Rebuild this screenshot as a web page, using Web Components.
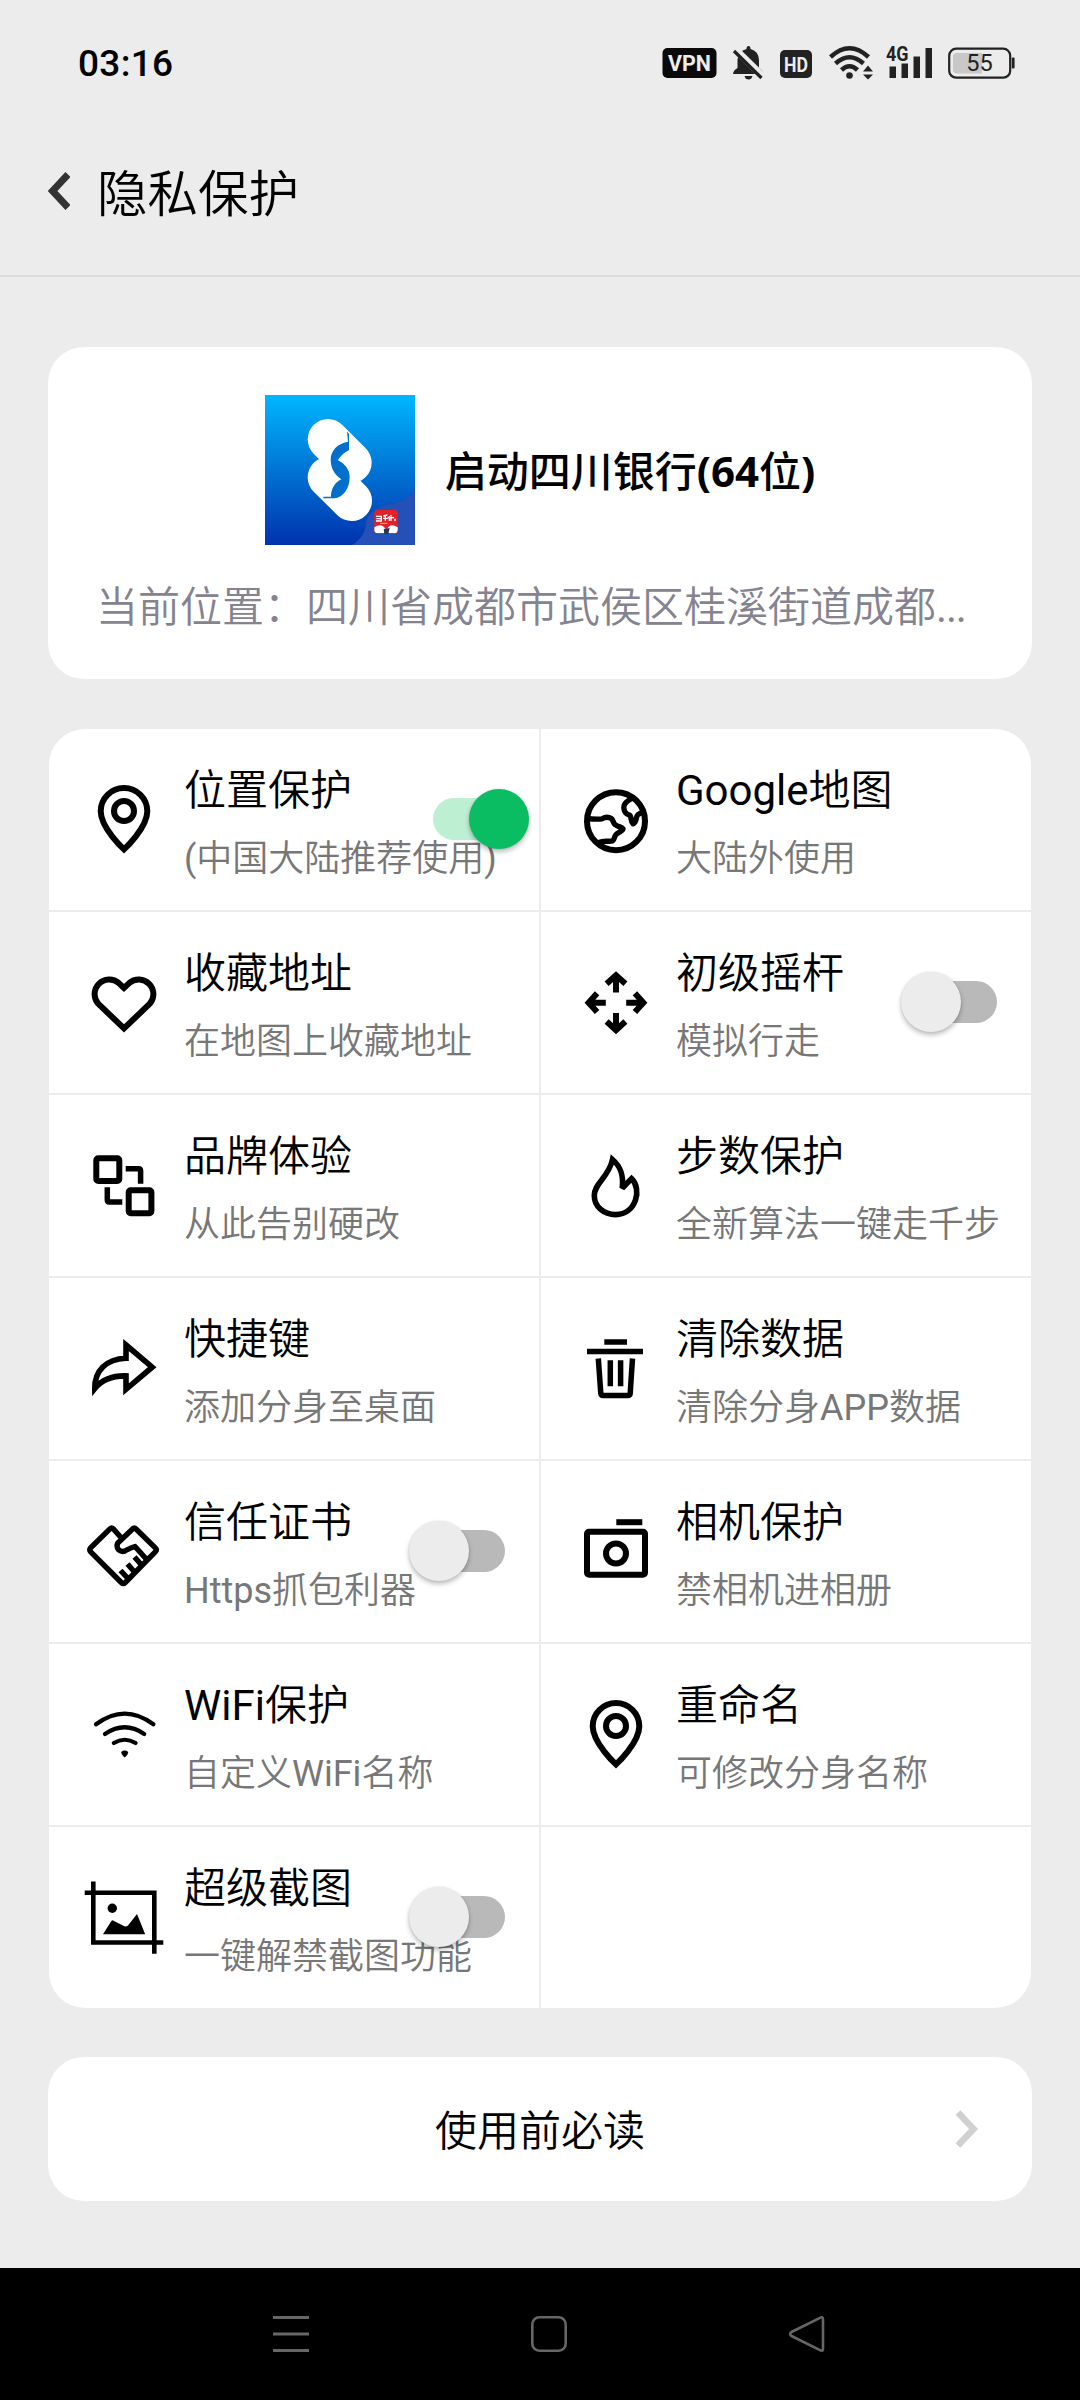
<!DOCTYPE html>
<html lang="zh-CN">
<head>
<meta charset="utf-8">
<meta name="viewport" content="width=1080">
<title>隐私保护</title>
<style>
html,body{margin:0;padding:0}
body{width:1080px;height:2400px;overflow:hidden;background:#ececec;color:#000;font-family:Roboto,"Noto Sans CJK SC",sans-serif;font-weight:350}
</style>
</head>
<body>
<privacy-screen></privacy-screen>
<script>
const define = (name, render) => customElements.define(name, class extends HTMLElement {
  constructor() { super(); this.attachShadow({ mode: 'open' }); }
  connectedCallback() { this.shadowRoot.innerHTML = render(this); }
});

const PIN = '<path d="M36 65.4C36 65.4 12.7 44 12.7 27.3a23.3 23.3 0 0 1 46.6 0C59.3 44 36 65.4 36 65.4z"/><circle cx="36" cy="27" r="10"/>';
const ICONS = {
  pin: PIN,
  heart: '<path d="M36 21L30.8 16.1A14.6 14.6 0 0 0 10.2 36.7L36 61.4L61.8 36.7A14.6 14.6 0 0 0 41.2 16.1Z"/>',
  swap: '<rect x="8.3" y="8.2" width="23" height="22.8" rx="2"/><rect x="40.7" y="40.2" width="22.7" height="23" rx="2"/><path stroke-width="5.5" d="M37.7 18.8H50.6Q52.6 18.8 52.6 20.8V33.8M19.3 37.2V50Q19.3 52 21.3 52H34.3"/>',
  share: '<path stroke-width="5.6" stroke-miterlimit="3" d="M38 12L64.2 34.2L38 56.3V42.9C25 42.6 14 46.5 6.8 55.5C6.5 38 18 26 38 25.3Z"/>',
  globe: '<circle cx="36" cy="37.2" r="29"/><path stroke-width="5.4" stroke-linejoin="round" d="M9 34.8C14 35 18 35.4 22 34.8C25 33 28.500 32.800 31 34.300C33.500 36 33 39 35 40.500C38 43 42 43 43 44.800C43 47 39 48 36.500 50C34 52 35 55 32.500 57C29 58 24 56 19 58.500M52 14C48 17 43.500 19 43.800 23.500C44 28 46 30 49 31C52 31.500 50 37 53 39.800C56 39 56 35 57 32C58 29 61 30 63.500 27"/>',
  move: [0, 90, 180, 270].map(a => `<path stroke-width="6" transform="rotate(${a} 36 35.7)" d="M26.600 16.800L36 8.300L45.400 16.800M36 9V25.500"/>`).join(''),
  flame: '<path stroke-width="5.6" stroke-miterlimit="3" d="M32.500 9.500C40 16 44 24 42.200 38.200L51.500 28.600C57 34 58 43 55.500 50C52 60 44 64.600 35.800 64.600C23.500 64.600 14.300 56.500 14.300 45.500C14.300 33 28.500 28 32.500 9.500Z"/>',
  trash: '<path stroke-width="5.5" d="M24.300 8.900H47M7 18.500H63M30.300 27.200V53.200M40.600 27.200V53.200M18.300 25.500L20.800 60.500Q21 62.500 23 62.500H48Q50 62.500 50.200 60.500L52.500 25.500"/>',
  hands: '<path stroke-width="5.400" stroke-linejoin="round" d="M33 21.500L25.700 13.200Q23.700 11.200 21.700 13.200L2.700 31.800Q.7 33.800 2.700 35.800L33.300 66.500Q35.300 68.500 37.300 66.500L67.300 35.800Q69.300 33.800 67.300 31.800L48.300 13.200Q46.300 11.200 44.300 13.200L29.800 27C27.500 32 31.500 36.500 36.500 35.200C40 33.500 41.500 32 47 30.500L58.700 43.500M46.500 41L54 49.500M39.500 48L47 56.500M32.500 54.500L40 62.500"/>',
  camera: '<rect x="7" y="15.800" width="58" height="43" rx="2"/><circle cx="36" cy="37.500" r="10"/><path d="M36.300 6.200H62.300"/>',
  wifi: '<g stroke-width="4.200" stroke-linecap="round"><path d="M8 25.300Q36.700 4 65.400 25.300M17 35Q36.700 21.500 56.200 35M25.800 44Q36.700 37.500 47.600 44"/></g><path fill="#000" stroke="none" d="M33.200 53Q36.700 50.200 40.200 53Q40.500 55 36.700 58.600Q33 55 33.200 53Z"/>',
  crop: '<path stroke-width="4.600" d="M5.300-.6V60.500H75.300M-3.300 10.700H66.300V71.800"/><g fill="#000" stroke="none"><circle cx="24.300" cy="26.300" r="4.700"/><path d="M15 52.300L23.400 38.900Q24 38 25 38.400L36.500 44.200Q38.500 45 40 43.400L49 32L57.200 52.300Z"/></g>'
};

define('status-bar', () => `<style>
:host{display:flex;align-items:center;height:125px;padding:0 65px 0 78px;box-sizing:border-box}
time{font-size:37px;font-weight:500;letter-spacing:.3px;margin-right:auto;padding-top:1px}
svg{display:block;fill:#222;overflow:visible}
text{font-family:Roboto,sans-serif;font-weight:700;fill:#ececec}
.vpn{margin-right:15px}.bell{margin-right:16px}.hd{margin-right:17px}.wifi{margin-right:13px}.sig{margin-right:16px}
</style>
<time>03:16</time>
<svg class="vpn" width="56" height="34"><rect x=".5" y="2" width="54" height="30" rx="5" fill="#0a0a0a"/><text x="27.500" y="25" font-size="22" text-anchor="middle" textLength="43" lengthAdjust="spacingAndGlyphs">VPN</text></svg>
<svg class="bell" width="31" height="34"><path d="M15.500 0q2 0 2 3q8 2 8.500 11v8q4 2.500 4.500 6H0q.5-4 4.500-6v-8q.5-9 9-11q0-3 2-3zM11.500 30h8q-1 3.500-4 3.500t-4-3.500z"/><path d="M2.500 3.500L30.500 31" stroke="#ececec" stroke-width="7"/><path d="M1 5L28.500 32" stroke="#222" stroke-width="3.200"/></svg>
<svg class="hd" width="32" height="34"><rect y="4" width="32" height="28" rx="5"/><text x="16" y="25.500" font-size="21" text-anchor="middle" textLength="24" lengthAdjust="spacingAndGlyphs">HD</text></svg>
<svg class="wifi" width="44" height="34"><g fill="none" stroke="#222" stroke-width="4.500"><path d="M1.500 11Q20.500-6.500 39.500 11M6.500 17.500Q20.500 5 34.500 17.500M12.500 24Q20.500 16.500 28.500 24"/></g><circle cx="20.500" cy="29.500" r="3.300"/><path d="M34 25.500L39 19.500L44 25.500ZM34 28.500H44L39 33.500Z"/></svg>
<svg class="sig" width="46" height="34"><path d="M3.500 20.500h6.500V32h-6.500zM15.500 17.500h6.500V32h-6.500zM27.500 10.500h6.500V32h-6.500zM39.500 2h6.500v30h-6.500z"/><text x="0" y="15" font-size="19.500" style="fill:#222" textLength="22.500" lengthAdjust="spacingAndGlyphs">4G</text></svg>
<svg width="67" height="34"><rect x="1.200" y="2.700" width="61" height="29" rx="7" fill="none" stroke="#222" stroke-width="2.200"/><path fill="#c8c8c8" d="M9 7H34V27.500H9Q5 27.500 5 23.500V11Q5 7 9 7Z"/><rect x="63.800" y="11.500" width="2.800" height="11" rx="1"/><text x="31.500" y="25.300" font-size="23.500" text-anchor="middle" style="fill:#222;font-weight:400">55</text></svg>`);

define('title-bar', () => `<style>
:host{display:flex;align-items:center;height:152px;padding:0 0 18px 48px;box-sizing:border-box;border-bottom:2px solid #dcdcdc}
svg{display:block;margin-right:27px}
h1{margin:0;padding-top:7px;font-size:50.500px;font-weight:inherit;line-height:70px}
</style>
<svg width="22" height="38" fill="none" stroke="#333" stroke-width="7"><path d="M20 2.500L4.500 19L20 35.500"/></svg><h1><slot></slot></h1>`);

define('ui-card', () => `<style>
:host{display:block;background:#fff;border-radius:36px;overflow:hidden;flex:none}
</style><slot></slot>`);

define('app-logo', () => `<style>:host{display:block;width:150px;height:150px}svg{display:block}</style>
<svg width="150" height="150" viewBox="0 0 450 450">
<defs><linearGradient id="g" x1="0" y1="0" x2="0" y2="1"><stop offset="0" stop-color="#00b6ff"/><stop offset=".45" stop-color="#007bd9"/><stop offset="1" stop-color="#0132ae"/></linearGradient></defs>
<rect width="450" height="450" fill="url(#g)"/>
<path fill="#2450b8" d="M450 280C438 308 420 316 395 322C350 330 300 350 302 395C296 420 280 440 260 450H450Z"/>
<path stroke="#fff" stroke-width="122" stroke-linecap="round" d="M189 133L259 203M189 247L260 317"/>
<path fill="#0070cc" d="M246 109L252 117V165Q226 180 219 196C242 208 254 225 254 247C254 280 235 307 210 310H175V305H198C198 285 207 263 229 253C207 238 197 218 197 193C197 170 215 145 249 140Z"/>
<rect x="328" y="345" width="70" height="72" rx="10" fill="#e32228"/>
<path fill="#fff" d="M328 397Q350 382 362 402L370 414H338Q328 414 328 404ZM398 397Q376 382 366 402L360 414H388Q398 414 398 404Z"/>
<path fill="#24365a" d="M356 402L374 399L370 417H358Z"/>
<path stroke="#fff" stroke-width="4" fill="none" d="M333 364H349V378H333M334 371H349M355 363L367 360M361 362V377M354 370H368M373 363V378M368 368H387M378 360V378M390 371V378"/><path stroke="#ffbe57" stroke-width="3" d="M345 385H367"/>
</svg>`);

define('launch-panel', () => `<style>
:host{display:flex;flex-direction:column;height:332px;padding:48px 48px 0;box-sizing:border-box}
.app{display:flex;align-items:center;justify-content:center;gap:30px;height:150px}
.name{padding-top:4px;font-size:42px;font-weight:500;line-height:60px;white-space:nowrap}
.num{font-family:"Noto Sans",sans-serif;font-weight:700}
.place{font-size:42px;line-height:60px;margin-top:33px;color:#85838f;white-space:nowrap}
.dots{font-weight:400;letter-spacing:-1.200px}
</style>
<div class="app"><app-logo></app-logo><div class="name">启动四川银行<span class="num">(64</span>位<span class="num">)</span></div></div>
<div class="place">当前位置：四川省成都市武侯区桂溪街道成都<span class="dots">...</span></div>`);

define('ui-switch', el => `<style>
:host{display:block;width:96px;height:60px}
.row{display:flex;align-items:center;width:96px}
.off{flex-direction:row-reverse}
.track{flex:1;height:42px;border-radius:21px;background:#b9b9b9}
.on .track{margin-right:-30px;background:#bdefd3}
.off .track{margin-left:-30px}
.thumb{position:relative;flex:none;width:60px;height:60px;border-radius:30px;background:#ececec;box-shadow:0 3px 5px rgba(0,0,0,.26),0 0 2px rgba(0,0,0,.1)}
.on .thumb{background:#0abd62}
</style><div class="row ${el.hasAttribute('on') ? 'on' : 'off'}"><div class="track"></div><div class="thumb"></div></div>`);

define('feature-cell', el => `<style>
:host{display:flex;align-items:center;position:relative;height:181px;background:#fff;padding-left:39px;box-sizing:border-box}
svg{display:block;overflow:visible;flex:none;margin-right:24px;fill:none;stroke:#000;stroke-width:6}
.t{display:flex;flex-direction:column;padding-top:11px;white-space:nowrap}
.a{font-size:42px;line-height:68px}
.b{font-size:36px;line-height:68px;color:#777}
::slotted(b){font-weight:400}
ui-switch{position:absolute;top:60px;right:${el.getAttribute('inset') || 34}px}
</style>
${el.getAttribute('icon') ? `<svg width="72" height="72">${ICONS[el.getAttribute('icon')]}</svg>` : ''}
<div class="t"><div class="a"><slot></slot></div><div class="b"><slot name="note"></slot></div></div>
${el.hasAttribute('toggle') ? `<ui-switch ${el.getAttribute('toggle')}></ui-switch>` : ''}`);

const FEATURES = [
  ['pin', '位置保护', '(中国大陆推荐使用)', 'toggle="on" inset="10"'],
  ['globe', 'Google地图', '大陆外使用', ''],
  ['heart', '收藏地址', '在地图上收藏地址', ''],
  ['move', '初级摇杆', '模拟行走', 'toggle'],
  ['swap', '品牌体验', '从此告别硬改', ''],
  ['flame', '步数保护', '全新算法一键走千步', ''],
  ['share', '快捷键', '添加分身至桌面', ''],
  ['trash', '清除数据', '清除分身APP数据', ''],
  ['hands', '信任证书', 'Https抓包利器', 'toggle'],
  ['camera', '相机保护', '禁相机进相册', ''],
  ['wifi', 'WiFi保护', '自定义WiFi名称', ''],
  ['pin', '重命名', '可修改分身名称', ''],
  ['crop', '超级截图', '一键解禁截图功能', 'toggle']
];
// Latin runs are set in regular weight beside the lighter Chinese glyphs.
const latin = s => s.replace(/[A-Za-z()]+/g, m => `<b>${m}</b>`);
define('feature-grid', () => `<style>
:host{display:grid;grid-template-columns:490px 490px;gap:2px;background:#ececec}
b{font-weight:400}
</style>${FEATURES.map(([i, t, n, x]) => `<feature-cell icon="${i}" ${x}>${latin(t)}<span slot="note">${latin(n)}</span></feature-cell>`).join('')}<feature-cell></feature-cell>`);

define('link-row', () => `<style>
:host{display:grid;grid-template-columns:1fr auto 1fr;align-items:center;height:144px;padding:0 53px;font-size:42px;line-height:60px}
svg{display:block;grid-column:3;justify-self:end}
span{grid-column:2;padding-top:5px}
</style><span><slot></slot></span><svg width="24" height="38" fill="none" stroke="#d0d0d0" stroke-width="6.500"><path d="M3 2.500L18.500 19L3 35.500"/></svg>`);

define('nav-bar', () => `<style>
:host{display:flex;align-items:center;height:132px;background:#000;padding-left:273px;gap:222px;box-sizing:border-box}
svg{display:block;fill:none;stroke:#666;stroke-width:2.600}
</style>
<svg width="36" height="38"><path stroke-width="3" d="M0 2.500H36M0 19H36M0 35.500H36"/></svg>
<svg width="36" height="38"><rect x="1.300" y="2.300" width="33.400" height="33.400" rx="7"/></svg>
<svg width="36" height="38"><path stroke-linejoin="round" d="M31 2.800Q34 1.200 34 4.500V33.500Q34 36.800 31 35.200L2.500 21Q-.2 19 2.500 17Z"/></svg>`);

define('privacy-screen', () => `<style>
:host{display:flex;flex-direction:column;width:1080px;height:2400px;background:#ececec}
main{flex:1;display:flex;flex-direction:column;align-items:center;padding-top:70px}
ui-card{width:984px}
.grid{width:982px;margin:50px 0 49px}
</style>
<status-bar></status-bar>
<title-bar>隐私保护</title-bar>
<main>
<ui-card><launch-panel></launch-panel></ui-card>
<ui-card class="grid"><feature-grid></feature-grid></ui-card>
<ui-card><link-row>使用前必读</link-row></ui-card>
</main>
<nav-bar></nav-bar>`);
</script>
</body>
</html>
